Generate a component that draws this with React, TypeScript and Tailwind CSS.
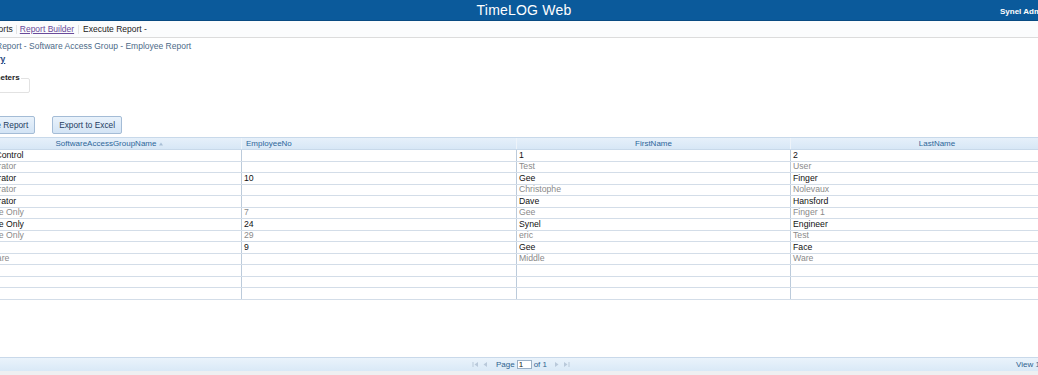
import React from "react";

const rows = [
  { group: "Access Control", no: "", first: "1", last: "2" },
  { group: "Administrator", no: "", first: "Test", last: "User" },
  { group: "Administrator", no: "10", first: "Gee", last: "Finger" },
  { group: "Administrator", no: "", first: "Christophe", last: "Nolevaux" },
  { group: "Administrator", no: "", first: "Dave", last: "Hansford" },
  { group: "Employee Only", no: "7", first: "Gee", last: "Finger 1" },
  { group: "Employee Only", no: "24", first: "Synel", last: "Engineer" },
  { group: "Employee Only", no: "29", first: "eric", last: "Test" },
  { group: "All", no: "9", first: "Gee", last: "Face" },
  { group: "Middleware", no: "", first: "Middle", last: "Ware" },
  { group: "", no: "", first: "", last: "" },
  { group: "", no: "", first: "", last: "" },
  { group: "", no: "", first: "", last: "" },
];

const cols = ["w-[276px]", "w-[275px]", "w-[274px]", "w-[292px]"];

const PagerIcon = ({ dir, end }: { dir: "l" | "r"; end?: boolean }) => (
  <svg width="7" height="7" viewBox="0 0 7 7" className="text-[#b9c9da]">
    {dir === "l" ? (
      <>
        {end && <rect x="0.5" y="1" width="1" height="5" fill="currentColor" />}
        <path d="M6 1 L2.5 3.5 L6 6 Z" fill="currentColor" />
      </>
    ) : (
      <>
        <path d="M1 1 L4.5 3.5 L1 6 Z" fill="currentColor" />
        {end && <rect x="5.5" y="1" width="1" height="5" fill="currentColor" />}
      </>
    )}
  </svg>
);

export default function App() {
  return (
    <div
      className="w-[1038px] h-[375px] overflow-hidden bg-white flex flex-col"
      style={{ fontFamily: '"Liberation Sans", Arial, sans-serif' }}
    >
      {/* Top bar */}
      <header className="h-[21px] shrink-0 bg-[#0b5a9b] border-b border-[#084a82] flex items-center relative">
        <div className="flex-1 flex justify-center pl-[10px]">
          <span className="text-white text-[14px] leading-none tracking-[0.2px]">TimeLOG Web</span>
        </div>
        <span className="absolute left-[1000px] top-[6px] text-white text-[8px] font-bold whitespace-nowrap">
          Synel Administrator
        </span>
      </header>

      {/* Breadcrumb */}
      <div className="h-[17px] shrink-0 bg-[#fbfcfd] border-b border-[#dcdcdc] flex items-center text-[8.5px] text-[#222] whitespace-nowrap -ml-[17px]">
        <span>Reports</span>
        <span className="mx-[3px] w-px h-[9px] bg-[#e3e3e3]" />
        <span className="text-[#6a4a9a] underline">Report Builder</span>
        <span className="mx-[4px] w-px h-[9px] bg-[#e3e3e3]" />
        <span>Execute Report -</span>
      </div>

      <div className="-ml-[36px] flex flex-col">
        <p className="pt-[3px] pl-[32px] text-[8.5px] leading-[11px] text-[#4c6a88] whitespace-nowrap">
          Report - Software Access Group - Employee Report
        </p>
        <a className="mt-[2px] pl-[12px] text-[8.5px] leading-[11px] text-[#1f3f7a] underline font-bold whitespace-nowrap">
          History
        </a>

        <fieldset className="mt-[7px] ml-[8px] w-[58px] h-[21px] border border-[#e2e2e2] rounded-[2px] px-[2px]">
          <legend className="text-[8px] font-bold text-[#222] px-[1px]">Parameters</legend>
        </fieldset>
      </div>

      {/* Buttons */}
      <div className="mt-[23px] -ml-[36px] flex gap-[17px]">
        <button className="h-[18px] px-[6px] text-[8.3px] text-[#1e3c60] rounded-[2px] border border-[#a4bcd6] bg-gradient-to-b from-[#e9f2fb] to-[#d3e4f5]">
          Execute Report
        </button>
        <button className="h-[18px] px-[6px] text-[8.3px] text-[#1e3c60] rounded-[2px] border border-[#a4bcd6] bg-gradient-to-b from-[#e9f2fb] to-[#d3e4f5]">
          Export to Excel
        </button>
      </div>

      {/* Grid */}
      <div className="mt-[3px] -ml-[34px] w-[1117px] text-[8.7px]">
        <div className="h-[13px] flex border-y border-[#c8d9ea] bg-gradient-to-b from-[#e6f0fa] to-[#d7e7f6] text-[#2d6699] text-[8px]">
          <div className={`${cols[0]} flex items-center justify-center gap-[3px] pl-[12px] border-r border-[#eef4fa]`}>
            SoftwareAccessGroupName
            <svg width="4" height="4" viewBox="0 0 4 4">
              <path d="M0 3.5 L2 0.5 L4 3.5 Z" fill="#a9bfd6" />
            </svg>
          </div>
          <div className={`${cols[1]} flex items-center pl-[4px] border-r border-[#eef4fa]`}>EmployeeNo</div>
          <div className={`${cols[2]} flex items-center justify-center border-r border-[#eef4fa]`}>FirstName</div>
          <div className={`${cols[3]} flex items-center justify-center`}>LastName</div>
        </div>
        {rows.map((r, i) => (
          <div
            key={i}
            className={`h-[11.5px] flex border-b border-[#d3dde8] ${
              i % 2 === 0 ? "text-[#111]" : "text-[#8a8a8a]"
            }`}
          >
            {[r.group, r.no, r.first, r.last].map((v, j) => (
              <div
                key={j}
                className={`${cols[j]} flex items-center whitespace-nowrap overflow-hidden ${
                  j < 3 ? "border-r border-[#bccbdb]" : ""
                } ${j === 0 ? "pl-0" : "pl-[2px]"}`}
              >
                <span className={j === 0 ? "-ml-[1px]" : ""}>{v}</span>
              </div>
            ))}
          </div>
        ))}
      </div>

      <div className="flex-1" />

      {/* Pager */}
      <div className="h-[14px] shrink-0 border-t border-[#c9d9ea] bg-gradient-to-b from-[#eaf3fb] to-[#d9e9f7] flex items-center relative text-[8px] text-[#2f628f]">
        <div className="flex-1 flex items-center justify-center gap-[2px] pl-[4px]">
          <PagerIcon dir="l" end />
          <PagerIcon dir="l" />
          <span className="w-[4px]" />
          <span>Page</span>
          <span className="w-[15px] h-[9px] bg-white border border-[#9ab0c6] text-[#222] leading-[7px] pl-[1px]">1</span>
          <span>of 1</span>
          <span className="w-[3px]" />
          <PagerIcon dir="r" />
          <PagerIcon dir="r" end />
        </div>
        <span className="absolute left-[1016px] whitespace-nowrap">View 1 - 10 of 10</span>
      </div>
      <div className="h-[4px] shrink-0 bg-[#eef0f2]" />
    </div>
  );
}
